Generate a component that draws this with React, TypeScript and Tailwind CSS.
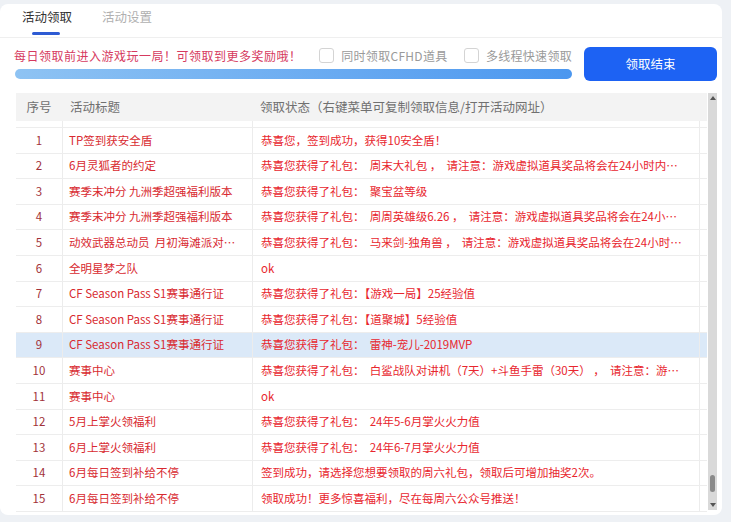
const rows: [string, string, string][] = [
  ['1', 'TP签到获安全盾', '恭喜您，签到成功，获得10安全盾！'],
  ['2', '6月灵狐者的约定', '恭喜您获得了礼包：  周末大礼包 ，  请注意：游戏虚拟道具奖品将会在24小时内…'],
  ['3', '赛季末冲分 九洲季超强福利版本', '恭喜您获得了礼包：  聚宝盆等级'],
  ['4', '赛季末冲分 九洲季超强福利版本', '恭喜您获得了礼包：  周周英雄级6.26 ，  请注意：游戏虚拟道具奖品将会在24小…'],
  ['5', '动效武器总动员  月初海滩派对…', '恭喜您获得了礼包：  马来剑-独角兽 ，  请注意：游戏虚拟道具奖品将会在24小时…'],
  ['6', '全明星梦之队', 'ok'],
  ['7', 'CF Season Pass S1赛事通行证', '恭喜您获得了礼包：【游戏一局】25经验值'],
  ['8', 'CF Season Pass S1赛事通行证', '恭喜您获得了礼包：【道聚城】5经验值'],
  ['9', 'CF Season Pass S1赛事通行证', '恭喜您获得了礼包：  雷神-宠儿-2019MVP'],
  ['10', '赛事中心', '恭喜您获得了礼包：  白鲨战队对讲机（7天）+斗鱼手雷（30天） ，  请注意：游…'],
  ['11', '赛事中心', 'ok'],
  ['12', '5月上掌火领福利', '恭喜您获得了礼包：  24年5-6月掌火火力值'],
  ['13', '6月上掌火领福利', '恭喜您获得了礼包：  24年6-7月掌火火力值'],
  ['14', '6月每日签到补给不停', '签到成功，请选择您想要领取的周六礼包，领取后可增加抽奖2次。'],
  ['15', '6月每日签到补给不停', '领取成功！更多惊喜福利，尽在每周六公众号推送！'],
]

function Checkbox({ label }: { label: string }) {
  return (
    <div className="flex items-center whitespace-nowrap">
      <span className="w-[15px] h-[15px] rounded-[3px] border border-[#d4d4d4] bg-white shrink-0" />
      <span className="ml-[7px] text-[12px] tracking-[0.3px] text-[#9a9a9a]">{label}</span>
    </div>
  )
}

export default function App() {
  return (
    <div
      className="w-[731px] h-[522px] bg-[#eef1f5] pt-[4px] overflow-hidden"
      style={{ fontFamily: '"Noto Sans CJK SC", "Noto Sans", sans-serif' }}
    >
      <div className="w-[722px] h-[511px] bg-white rounded-lg flex flex-col">
        {/* tabs */}
        <div className="h-[34px] border-b border-[#efefef] flex px-[22px] gap-[30px] shrink-0">
          <div className="relative h-full flex items-center pb-[6px] text-[12.5px] text-[#333]">
            活动领取
            <span className="absolute bottom-[2px] left-[10px] w-[28px] h-[3px] rounded-full bg-[#2e5bd3]" />
          </div>
          <div className="h-full flex items-center pb-[6px] text-[12.5px] text-[#b0b0b0]">活动设置</div>
        </div>

        {/* controls */}
        <div className="flex items-start mt-[9px] pl-[14px] shrink-0">
          <div className="w-[558px] flex flex-col">
            <div className="h-[17px] flex items-center">
              <span className="w-[306px] text-[12px] tracking-[0.5px] text-[#d63a60] whitespace-nowrap">
                每日领取前进入游戏玩一局！可领取到更多奖励哦！
              </span>
              <div className="w-[145px]">
                <Checkbox label="同时领取CFHD道具" />
              </div>
              <Checkbox label="多线程快速领取" />
            </div>
            <div className="mt-[5px] ml-[1px] h-[10px] rounded-full bg-gradient-to-r from-[#8ec3f3] to-[#4b97ef]" />
          </div>
          <button className="ml-[12px] w-[133px] h-[34px] rounded-[6px] bg-[#1d62f3] text-white text-[12.5px]">
            领取结束
          </button>
        </div>

        {/* table */}
        <div className="mt-[12px] ml-[16px] flex w-[702px]">
          <div className="w-[691px] flex flex-col">
            <div className="h-[28px] bg-[#f3f3f3] flex items-center text-[12.5px] text-[#707070]">
              <span className="w-[46px] text-center">序号</span>
              <span className="w-[190px] pl-[8px]">活动标题</span>
              <span className="pl-[8px]">领取状态（右键菜单可复制领取信息/打开活动网址）</span>
            </div>
            <div className="h-[7px] flex border-b border-[#ededed]">
              <span className="w-[46px]" />
              <span className="w-[190px] border-l border-[#ececec]" />
              <span className="w-[448px] border-l border-r border-[#ececec]" />
            </div>
            {rows.map(([n, title, status]) => (
              <div
                key={n}
                className={`h-[25.6px] flex items-center border-b border-[#ededed] text-[11.5px] ${
                  n === '9' ? 'bg-[#dbe9f8]' : ''
                }`}
              >
                <span className="w-[46px] text-center text-[#a2323a]">{n}</span>
                <span className="w-[190px] h-full flex items-center pl-[6px] border-l border-[#ececec] text-[#d82a30] whitespace-pre overflow-hidden">
                  {title}
                </span>
                <span className="w-[448px] h-full flex items-center pl-[8px] border-l border-r border-[#ececec] text-[#e8262e] whitespace-pre overflow-hidden">
                  {status}
                </span>
              </div>
            ))}
          </div>
          {/* scrollbar */}
          <div className="w-[9px] h-[417px] bg-[#d9d9d9] flex flex-col items-center justify-between py-[3px] ml-[1px]">
            <span className="w-0 h-0 border-l-[3px] border-r-[3px] border-b-[4px] border-l-transparent border-r-transparent border-b-[#555]" />
            <div className="flex-1" />
            <span className="w-[5px] h-[17px] rounded-full bg-[#8a8a8a] mb-[11px]" />
            <span className="w-0 h-0 border-l-[3px] border-r-[3px] border-t-[4px] border-l-transparent border-r-transparent border-t-[#555]" />
          </div>
        </div>
      </div>
    </div>
  )
}
